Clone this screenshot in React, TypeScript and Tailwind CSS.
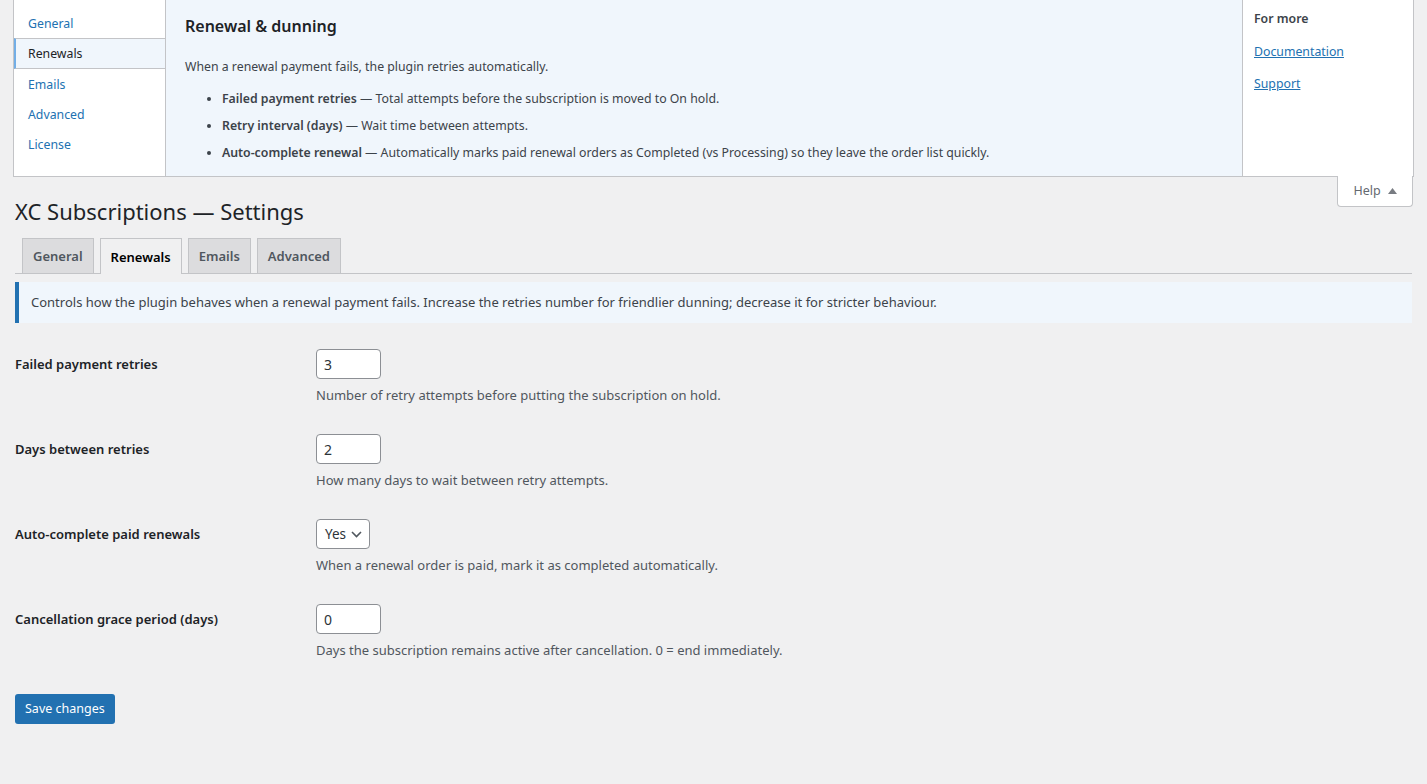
import React, { useState } from 'react';

const helpTabs = ['General', 'Renewals', 'Emails', 'Advanced', 'License'];
const navTabs = ['General', 'Renewals', 'Emails', 'Advanced'];

interface Field {
  label: string;
  value: string;
  kind: 'number' | 'select';
  description: string;
}

const fields: Field[] = [
  {
    label: 'Failed payment retries',
    value: '3',
    kind: 'number',
    description: 'Number of retry attempts before putting the subscription on hold.',
  },
  {
    label: 'Days between retries',
    value: '2',
    kind: 'number',
    description: 'How many days to wait between retry attempts.',
  },
  {
    label: 'Auto-complete paid renewals',
    value: 'Yes',
    kind: 'select',
    description: 'When a renewal order is paid, mark it as completed automatically.',
  },
  {
    label: 'Cancellation grace period (days)',
    value: '0',
    kind: 'number',
    description: 'Days the subscription remains active after cancellation. 0 = end immediately.',
  },
];

const HelpPanel = () => {
  const [active, setActive] = useState('Renewals');

  return (
    <div className="mx-[13px] flex h-[177px] border border-t-0 border-[#c3c4c7] bg-white text-[12.3px]">
      {/* left tab list */}
      <ul className="w-[151px] shrink-0 pt-[8px]">
        {helpTabs.map((tab) => (
          <li
            key={tab}
            onClick={() => setActive(tab)}
            className={
              tab === active
                ? 'h-[31px] cursor-pointer border-y border-l-2 border-y-[#c3c4c7] border-l-[#72aee6] bg-[#f0f6fc] pl-[12px] leading-[30px] text-[#1d2327]'
                : 'h-[30px] cursor-pointer pl-[14px] leading-[32px] text-[#2271b1]'
            }
          >
            {tab}
          </li>
        ))}
      </ul>

      <div className="flex-1 border-l border-[#c3c4c7] bg-[#f0f6fc] pl-[19px] pr-4">
        <h2 className="mt-[14px] text-[16px] font-semibold leading-[24px] text-[#1d2327]">Renewal &amp; dunning</h2>
        <p className="mt-[20px] leading-[18px]">When a renewal payment fails, the plugin retries automatically.</p>
        <ul className="mt-[14px] list-disc pl-[37px] marker:text-[#3c434a]">
          <li className="mb-[9px] leading-[18px]">
            <strong className="font-semibold">Failed payment retries</strong> — Total attempts before the subscription is moved to On hold.
          </li>
          <li className="mb-[9px] leading-[18px]">
            <strong className="font-semibold">Retry interval (days)</strong> — Wait time between attempts.
          </li>
          <li className="leading-[18px]">
            <strong className="font-semibold">Auto-complete renewal</strong> — Automatically marks paid renewal orders as Completed (vs Processing) so they leave the order list quickly.
          </li>
        </ul>
      </div>

      <div className="w-[171px] shrink-0 border-l border-[#c3c4c7] pl-[11px]">
        <p className="mt-[10px] font-semibold leading-[18px]">For more</p>
        <p className="mt-[15px] leading-[18px]">
          <a href="#" className="text-[#2271b1] underline">Documentation</a>
        </p>
        <p className="mt-[14px] leading-[18px]">
          <a href="#" className="text-[#2271b1] underline">Support</a>
        </p>
      </div>
    </div>
  );
};

const HelpToggle = () => (
  <div className="mr-[14px] flex justify-end">
    <button className="-mt-px flex h-[31px] w-[76px] items-center justify-center gap-[7px] rounded-b-[4px] border border-t-0 border-[#c3c4c7] bg-white text-[12.5px] text-[#646970]">
      Help
      <svg width="9" height="6" viewBox="0 0 9 6">
        <path d="M0 6 L4.5 0 L9 6 Z" fill="#787c82" />
      </svg>
    </button>
  </div>
);

const FieldControl = ({ field }: { field: Field }) => {
  if (field.kind === 'select') {
    return (
      <div className="flex h-[30px] w-[54px] items-center justify-between rounded-[4px] border border-[#8c8f94] bg-white pl-[8px] pr-[7px] text-[13.5px] text-[#2c3338]">
        {field.value}
        <svg width="11" height="7" viewBox="0 0 11 7" fill="none">
          <path d="M1 1 L5.5 5.5 L10 1" stroke="#50575e" strokeWidth="1.6" />
        </svg>
      </div>
    );
  }
  return (
    <input
      type="text"
      defaultValue={field.value}
      className="h-[30px] w-[65px] rounded-[4px] border border-[#8c8f94] bg-white px-[7px] text-[14px] text-[#2c3338] outline-none"
    />
  );
};

export default function App() {
  const [tab, setTab] = useState('Renewals');

  return (
    <div
      className="min-h-[784px] bg-[#f0f0f1] text-[13px] text-[#3c434a]"
      style={{ fontFamily: '"Noto Sans", "Open Sans", Arial, sans-serif' }}
    >
      <HelpPanel />
      <HelpToggle />

      <div className="px-[15px]">
        <h1 className="-mt-[10px] text-[22px] font-normal leading-[29px] text-[#1d2327]">XC Subscriptions — Settings</h1>

        <nav className="mt-[12px] flex gap-[6px] border-b border-[#c3c4c7] pl-[7px]">
          {navTabs.map((t) => (
            <button
              key={t}
              onClick={() => setTab(t)}
              className={
                t === tab
                  ? '-mb-px h-[36px] border border-b-0 border-[#c3c4c7] bg-[#f0f0f1] px-[10px] pt-[2px] text-[13px] font-semibold text-black'
                  : 'h-[35px] border border-b-0 border-[#c3c4c7] bg-[#dcdcde] px-[10px] pt-[2px] text-[13px] font-semibold text-[#50575e]'
              }
            >
              {t}
            </button>
          ))}
        </nav>

        <div className="mt-[8px] flex h-[41px] items-center border-l-4 border-[#2271b1] bg-[#f0f6fc] pl-[12px]">
          Controls how the plugin behaves when a renewal payment fails. Increase the retries number for friendlier dunning; decrease it for stricter behaviour.
        </div>

        <div className="mt-[26px]">
          {fields.map((field) => (
            <div key={field.label} className="flex h-[85px]">
              <div className="w-[301px] shrink-0 pt-[6px] text-[13px] font-semibold leading-[18px] text-[#1d2327]">
                {field.label}
              </div>
              <div>
                <FieldControl field={field} />
                <p className="mt-[7px] leading-[18px] text-[#50575e]">{field.description}</p>
              </div>
            </div>
          ))}
        </div>

        <button className="mt-[5px] h-[30px] rounded-[3px] bg-[#2271b1] px-[10px] text-[12.5px] text-white">
          Save changes
        </button>
      </div>
    </div>
  );
}
